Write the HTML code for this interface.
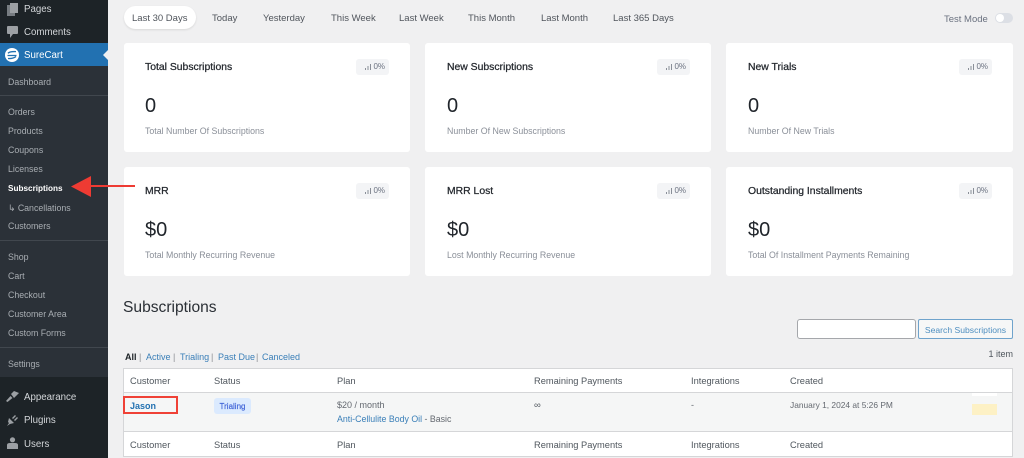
<!DOCTYPE html>
<html><head><meta charset="utf-8">
<style>
html,body{margin:0;padding:0;width:1024px;height:458px;overflow:hidden;background:#f0f0f1;font-family:"Liberation Sans",sans-serif}
.a{position:absolute}
.t{position:absolute;line-height:20px;white-space:nowrap;margin-top:1px}
.m{font-size:8.8px;color:#a9aeb3;left:8px;margin-top:2.5px}
.n{font-size:9.7px;color:#d3d6d9;left:24px}
.tab{font-size:9.5px;color:#50555c;top:8px}
.card{position:absolute;width:286px;height:109px;background:#fff;border-radius:3px}
.card b{position:absolute;left:21px;top:15px;line-height:20px;font-size:10.4px;font-weight:normal;color:#24282e;-webkit-text-stroke:.25px #24282e;white-space:nowrap}
.card i{position:absolute;left:21px;top:50px;line-height:26px;font-size:20px;font-style:normal;color:#20252b}
.card u{position:absolute;left:21px;top:78px;line-height:20px;font-size:8.8px;text-decoration:none;color:#8a8f98;white-space:nowrap}
.c2 b,.c2 i,.c2 u{left:22px}
.bd{position:absolute;right:21px;top:16px;width:33px;height:16px;background:#f3f4f6;border-radius:3px;font-size:8px;line-height:16px;color:#6b7280;text-align:right;box-sizing:border-box;padding-right:4px}
.bd svg{position:absolute;left:9px;top:5px}
.th{font-size:9.3px;color:#50575e}
.lk{color:#3a7fb8}
.f{position:absolute;top:347px;font-size:9px;line-height:20px;color:#8c8f94;white-space:nowrap}
.f.lk{color:#3a7fb8}
.sep{position:absolute;left:0;width:108px;height:1px;background:#41474e}
</style></head><body>
<div class="a" style="left:0;top:0;width:108px;height:458px;background:#1d2327"></div>
<div class="a" style="left:0;top:66px;width:108px;height:311px;background:#2b3138"></div>
<div class="a" style="left:0;top:43px;width:108px;height:23px;background:#2271b1"></div>
<div class="a" style="left:103px;top:50px;width:0;height:0;border:5px solid transparent;border-left:0;border-right:5px solid #f0f0f1"></div>

<svg class="a" style="left:7px;top:3px" width="11" height="13" viewBox="0 0 11 13"><path d="M0 2h3v8h5v3H0z" fill="#777c81"/><path d="M3 0h8v10H3z" fill="#9ca0a4"/></svg>
<svg class="a" style="left:7px;top:26px" width="11" height="12" viewBox="0 0 11 12"><path d="M1 0h9a1 1 0 0 1 1 1v6a1 1 0 0 1-1 1H6l-3 4V8H1a1 1 0 0 1-1-1V1a1 1 0 0 1 1-1z" fill="#9ca0a4"/></svg>
<svg class="a" style="left:5px;top:48px" width="14" height="14" viewBox="0 0 14 14"><circle cx="7" cy="7" r="7" fill="#fff"/><path d="M3 5.300Q4.500 3.300 11 3.600M2.500 7.500h9M3 10.500q5 .4 8-2" stroke="#2271b1" stroke-width="1.300" fill="none"/></svg>
<svg class="a" style="left:6px;top:390px" width="13" height="12" viewBox="0 0 13 12"><path d="M0 11 4.500 6l2 2-5 4zM5 4l3-3 5 2-3 3-2 2z" fill="#9ca0a4"/></svg>
<svg class="a" style="left:7px;top:413px" width="12" height="13" viewBox="0 0 12 13"><path d="M0 13l2-3-1-1 1-4 5 5-4 1zM5 5l3-3 1 1-3 3zM7 7l3-3 1 1-3 3z" fill="#9ca0a4"/></svg>
<svg class="a" style="left:7px;top:437px" width="11" height="12" viewBox="0 0 11 12"><circle cx="5.500" cy="2.800" r="2.600" fill="#9ca0a4"/><path d="M0 12V8q0-2 3-2h5q3 0 3 2v4z" fill="#9ca0a4"/></svg>

<span class="t n" style="top:-1px">Pages</span>
<span class="t n" style="top:22px">Comments</span>
<span class="t n" style="top:45px;color:#fff">SureCart</span>
<span class="t m" style="top:69px">Dashboard</span>
<div class="sep" style="top:95px"></div>
<span class="t m" style="top:99px">Orders</span>
<span class="t m" style="top:118px">Products</span>
<span class="t m" style="top:137px">Coupons</span>
<span class="t m" style="top:156px">Licenses</span>
<span class="t m" style="top:176px;color:#fff;font-weight:bold;font-size:8.2px">Subscriptions</span>
<span class="t m" style="top:195px">↳ Cancellations</span>
<span class="t m" style="top:213px">Customers</span>
<div class="sep" style="top:240px"></div>
<span class="t m" style="top:244px">Shop</span>
<span class="t m" style="top:263px">Cart</span>
<span class="t m" style="top:282px">Checkout</span>
<span class="t m" style="top:301px">Customer Area</span>
<span class="t m" style="top:320px">Custom Forms</span>
<div class="sep" style="top:347px"></div>
<span class="t m" style="top:351px">Settings</span>
<span class="t n" style="top:387px">Appearance</span>
<span class="t n" style="top:410px">Plugins</span>
<span class="t n" style="top:434px">Users</span>

<div class="a" style="left:124px;top:6px;width:72px;height:23px;background:#fff;border-radius:12px;box-shadow:0 1px 2px rgba(0,0,0,.1)"></div>
<span class="t tab" style="left:132px">Last 30 Days</span>
<span class="t tab" style="left:212px">Today</span>
<span class="t tab" style="left:263px">Yesterday</span>
<span class="t tab" style="left:331px">This Week</span>
<span class="t tab" style="left:399px">Last Week</span>
<span class="t tab" style="left:468px">This Month</span>
<span class="t tab" style="left:541px">Last Month</span>
<span class="t tab" style="left:613px">Last 365 Days</span>
<span class="t tab" style="left:944px;top:9px;color:#6b7280">Test Mode</span>
<div class="a" style="left:995px;top:13px;width:18px;height:10px;background:#dcdfe5;border-radius:5px"></div>
<div class="a" style="left:996px;top:14px;width:8px;height:8px;background:#fff;border-radius:50%"></div>

<div class="card" style="left:124px;top:43px"><b>Total Subscriptions</b><div class="bd"><svg width="6" height="6"><path d="M0 4h1v2H0zM2.500 2h1v4h-1zM5 0h1v6H5z" fill="#8a8f98"/></svg>0%</div><i>0</i><u>Total Number Of Subscriptions</u></div>
<div class="card c2" style="left:425px;top:43px"><b>New Subscriptions</b><div class="bd"><svg width="6" height="6"><path d="M0 4h1v2H0zM2.500 2h1v4h-1zM5 0h1v6H5z" fill="#8a8f98"/></svg>0%</div><i>0</i><u>Number Of New Subscriptions</u></div>
<div class="card c2" style="left:726px;top:43px;width:287px"><b>New Trials</b><div class="bd"><svg width="6" height="6"><path d="M0 4h1v2H0zM2.500 2h1v4h-1zM5 0h1v6H5z" fill="#8a8f98"/></svg>0%</div><i>0</i><u>Number Of New Trials</u></div>
<div class="card" style="left:124px;top:167px"><b>MRR</b><div class="bd"><svg width="6" height="6"><path d="M0 4h1v2H0zM2.500 2h1v4h-1zM5 0h1v6H5z" fill="#8a8f98"/></svg>0%</div><i>$0</i><u>Total Monthly Recurring Revenue</u></div>
<div class="card c2" style="left:425px;top:167px"><b>MRR Lost</b><div class="bd"><svg width="6" height="6"><path d="M0 4h1v2H0zM2.500 2h1v4h-1zM5 0h1v6H5z" fill="#8a8f98"/></svg>0%</div><i>$0</i><u>Lost Monthly Recurring Revenue</u></div>
<div class="card c2" style="left:726px;top:167px;width:287px"><b>Outstanding Installments</b><div class="bd"><svg width="6" height="6"><path d="M0 4h1v2H0zM2.500 2h1v4h-1zM5 0h1v6H5z" fill="#8a8f98"/></svg>0%</div><i>$0</i><u>Total Of Installment Payments Remaining</u></div>

<span class="t" style="left:123px;top:297px;font-size:15.600px;color:#2a2f35">Subscriptions</span>
<div class="a" style="left:797px;top:319px;width:117px;height:18px;background:#fff;border:1px solid #a5a7ab;border-radius:3px"></div>
<div class="a" style="left:918px;top:319px;width:93px;height:18px;background:#f6f7f7;border:1px solid #6fa3cc;border-radius:2px;font-size:8.600px;line-height:20px;text-align:center;color:#4f8fc0;white-space:nowrap">Search Subscriptions</div>
<span class="t" style="right:11px;top:343px;font-size:9px;color:#50575e">1 item</span>
<span class="f" style="left:125px;color:#1d2327;font-weight:bold">All</span>
<span class="f" style="left:139px">|</span>
<span class="f lk" style="left:146px">Active</span>
<span class="f" style="left:173px">|</span>
<span class="f lk" style="left:180px">Trialing</span>
<span class="f" style="left:211px">|</span>
<span class="f lk" style="left:218px">Past Due</span>
<span class="f" style="left:256px">|</span>
<span class="f lk" style="left:262px">Canceled</span>

<div class="a" style="left:123px;top:368px;width:888px;height:87px;background:#fff;border:1px solid #d5d6d8"></div>
<div class="a" style="left:124px;top:392px;width:888px;height:40px;background:#f5f6f6;border-top:1px solid #d5d6d8;border-bottom:1px solid #d5d6d8;box-sizing:border-box"></div>

<span class="t th" style="left:130px;top:370px">Customer</span>
<span class="t th" style="left:214px;top:370px">Status</span>
<span class="t th" style="left:337px;top:370px">Plan</span>
<span class="t th" style="left:534px;top:370px">Remaining Payments</span>
<span class="t th" style="left:691px;top:370px">Integrations</span>
<span class="t th" style="left:790px;top:370px">Created</span>

<div class="a" style="left:123px;top:396px;width:51px;height:14px;border:2px solid #ef4136"></div>
<span class="t" style="left:130px;top:395px;font-size:9px;color:#2271b1;font-weight:bold">Jason</span>
<div class="a" style="left:214px;top:398px;width:37px;height:16px;background:#dbeafe;border-radius:3px;font-size:8px;line-height:18px;text-align:center;color:#3b5fd6;-webkit-text-stroke:.15px #3b5fd6">Trialing</div>
<span class="t" style="left:337px;top:394px;font-size:9px;color:#646970">$20 / month</span>
<span class="t" style="left:337px;top:408px;font-size:8.800px;color:#646970"><span class="lk">Anti-Cellulite Body Oil</span> - Basic</span>
<span class="t" style="left:534px;top:395px;font-size:9.500px;color:#50575e">∞</span>
<span class="t" style="left:691px;top:394px;font-size:9px;color:#646970">-</span>
<span class="t" style="left:790px;top:394px;font-size:8.400px;color:#646970">January 1, 2024 at 5:26 PM</span>
<div class="a" style="left:972px;top:393px;width:25px;height:3px;background:#fff"></div>
<div class="a" style="left:972px;top:404px;width:25px;height:11px;background:#fdf1c5"></div>

<span class="t th" style="left:130px;top:434px">Customer</span>
<span class="t th" style="left:214px;top:434px">Status</span>
<span class="t th" style="left:337px;top:434px">Plan</span>
<span class="t th" style="left:534px;top:434px">Remaining Payments</span>
<span class="t th" style="left:691px;top:434px">Integrations</span>
<span class="t th" style="left:790px;top:434px">Created</span>

<svg class="a" style="left:70px;top:175px;z-index:5" width="66" height="23" viewBox="0 0 66 23"><path d="M1 11.500 21 1v9h44v2H21v10z" fill="#ee3b33"/></svg>
</body></html>
